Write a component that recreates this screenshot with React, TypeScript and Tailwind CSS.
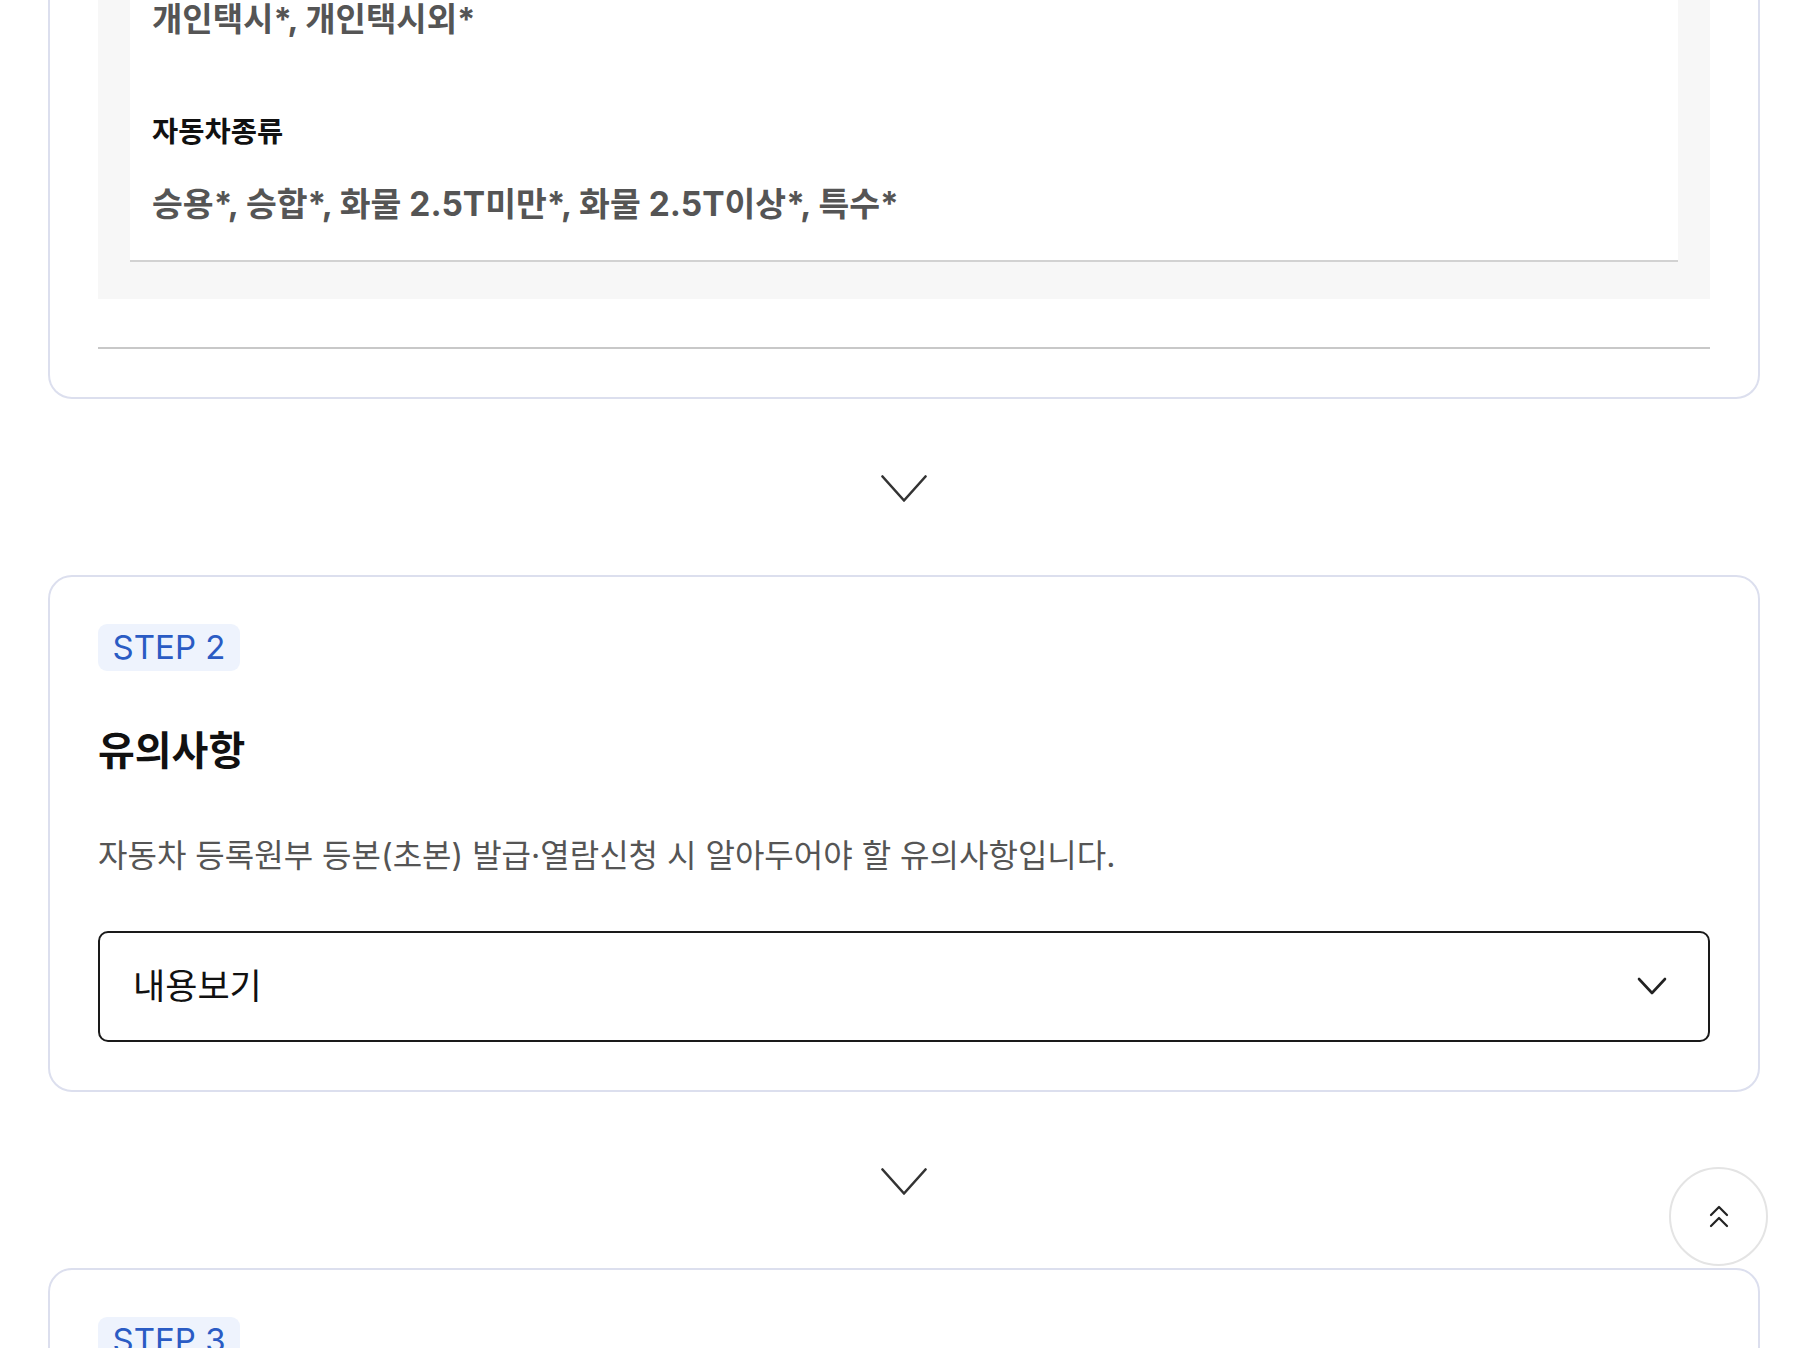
import React from "react";

const Chevron = () => (
  <div className="flex h-[176px] items-center justify-center pt-[3px]">
    <svg width="46" height="28" viewBox="0 0 46 28" fill="none">
      <polyline points="1.5,1.5 23,25.5 44.5,1.5" stroke="#333" strokeWidth="2.6" strokeLinecap="round" strokeLinejoin="round" />
    </svg>
  </div>
);

const Badge = ({ n }: { n: number }) => (
  <div className="flex h-[47px] w-[142px] items-center justify-center rounded-[9px] bg-[#eef3fd] text-[33px] leading-none text-[#2a5bc4]">
    STEP {n}
  </div>
);

export default function App() {
  return (
    <div className="relative h-[1348px] overflow-hidden bg-white font-['Inter','Noto_Sans_CJK_KR',sans-serif]">
      <div className="px-12">
        {/* Card 1 (top cut off) */}
        <div className="rounded-b-3xl border-x-2 border-b-2 border-[#dcdfee] px-12 pb-[48px]">
          <div className="bg-[#f7f7f7] px-8 pb-[37px]">
            <div className="border-b-2 border-[#d2d2d2] bg-white px-[22px] pb-[33px]">
              <p className="-mt-1 text-[33px] font-bold leading-[46px] text-[#555]">개인택시*, 개인택시외*</p>
              <p className="mt-[72px] text-[28.5px] font-bold leading-[36px] text-[#111]">자동차종류</p>
              <p className="mt-[31px] text-[33.5px] font-bold leading-[46px] text-[#555]">
                승용*, 승합*, 화물 2.5T미만*, 화물 2.5T이상*, 특수*
              </p>
            </div>
          </div>
          <div className="mt-12 h-[2px] bg-[#c8c8c8]" />
        </div>

        <Chevron />

        {/* Card 2 */}
        <div className="rounded-3xl border-2 border-[#dcdfee] p-12 pt-[47px]">
          <Badge n={2} />
          <h2 className="mt-[52px] text-[40px] font-bold leading-[56px] text-[#111]">유의사항</h2>
          <p className="mt-[54px] text-[32px] leading-[45px] text-[#555]">
            자동차 등록원부 등본(초본) 발급·열람신청 시 알아두어야 할 유의사항입니다.
          </p>
          <button className="mt-[53px] flex h-[111px] w-full items-center justify-between rounded-[10px] border-2 border-[#1a1a1a] pl-[33px] pr-[41px] text-left">
            <span className="text-[35px] leading-none text-[#111]">내용보기</span>
            <svg width="30" height="19" viewBox="0 0 30 19" fill="none">
              <polyline points="2,2 15,16 28,2" stroke="#222" strokeWidth="2.6" strokeLinecap="round" strokeLinejoin="round" />
            </svg>
          </button>
        </div>

        <Chevron />

        {/* Card 3 */}
        <div className="h-[200px] rounded-3xl border-2 border-[#dcdfee] p-12 pt-[47px]">
          <Badge n={3} />
        </div>
      </div>

      {/* Scroll to top */}
      <button className="absolute bottom-[82px] right-[40px] flex h-[99px] w-[99px] items-center justify-center rounded-full border-2 border-[#e4e4e4] bg-white">
        <svg width="20" height="24" viewBox="0 0 20 24" fill="none">
          <polyline points="2,10 10,2 18,10" stroke="#222" strokeWidth="2.2" strokeLinecap="round" strokeLinejoin="round" />
          <polyline points="2,21 10,13 18,21" stroke="#222" strokeWidth="2.2" strokeLinecap="round" strokeLinejoin="round" />
        </svg>
      </button>
    </div>
  );
}
